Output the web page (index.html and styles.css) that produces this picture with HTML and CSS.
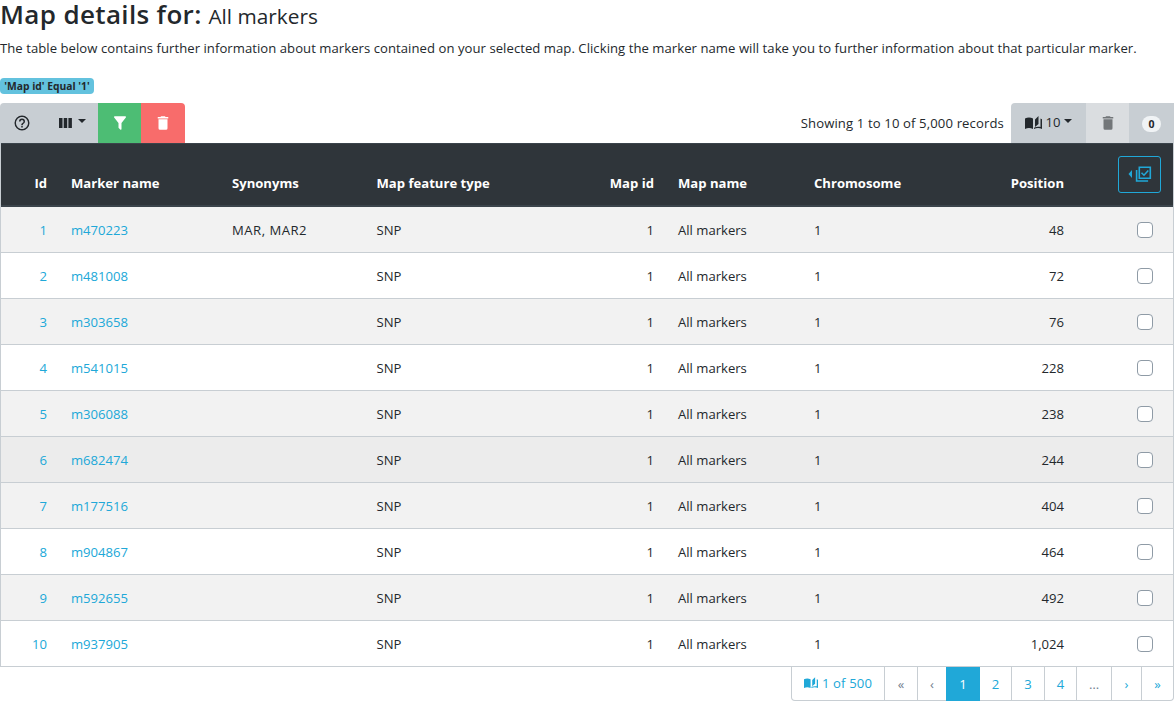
FILE: index.html
```
<!DOCTYPE html>
<html lang="en">
<head>
<meta charset="utf-8">
<title>Map details</title>
<link rel="stylesheet" href="styles.css">
</head>
<body>
<svg width="0" height="0" class="sprite">
  <symbol id="trash" viewBox="0 0 24 24"><path fill="currentColor" d="M19 4h-3.500l-1-1h-5l-1 1H5v2h14M6 19a2 2 0 0 0 2 2h8a2 2 0 0 0 2-2V7H6v12z"/></symbol>
  <symbol id="book" viewBox="0 0 17 14"><path fill="currentColor" d="M0 2.500C2.500 1.200 5.500 1.200 8 2.500V13C5.500 11.700 2.500 11.700 0 13zM13.500 0v8L10 11V3.500zM15.500 2.500l1.500.700V13c-2.500-1.300-5.500-1.300-8 0V2.500v9.200c2-.900 4.300-1.100 6.500-.700z"/></symbol>
</svg>
<h1 class="title"><span>Map details for:</span> <small>All markers</small></h1>
<p class="intro">The table below contains further information about markers contained on your selected map. Clicking the marker name will take you to further information about that particular marker.</p>
<div class="filters"><span class="badge">'Map id' Equal '1'</span></div>
<div class="toolbar">
  <div class="group left">
    <button class="btn help"><svg class="icon help-icon" viewBox="0 0 24 24"><path fill="currentColor" d="M11 18h2v-2h-2v2m1-16A10 10 0 0 0 2 12a10 10 0 0 0 10 10 10 10 0 0 0 10-10A10 10 0 0 0 12 2m0 18c-4.410 0-8-3.590-8-8s3.590-8 8-8 8 3.590 8 8-3.590 8-8 8m0-14a4 4 0 0 0-4 4h2a2 2 0 0 1 2-2 2 2 0 0 1 2 2c0 2-3 1.750-3 5h2c0-2.250 3-2.500 3-5a4 4 0 0 0-4-4z"/></svg></button>
    <button class="btn columns"><svg class="columns-icon" viewBox="0 0 13 10"><path fill="currentColor" d="M0 0h3.500v10H0zM4.700 0h3.500v10H4.700zM9.400 0h3.500v10H9.400z"/></svg><i class="caret"></i></button>
    <button class="btn filter"><svg class="icon" viewBox="0 0 24 24"><path fill="currentColor" d="M14 12v7.880c.040.300-.060.620-.290.830a.996.996 0 0 1-1.410 0l-2.010-2.010a.989.989 0 0 1-.290-.830V12h-.030L4.210 4.620a1 1 0 0 1 .170-1.400c.190-.140.400-.220.620-.220h14c.220 0 .430.080.620.220a1 1 0 0 1 .170 1.400L14.030 12H14z"/></svg></button>
    <button class="btn clear"><svg class="icon"><use href="#trash"/></svg></button>
  </div>
  <span class="records">Showing 1 to 10 of 5,000 records</span>
  <div class="group right">
    <button class="btn per-page"><svg class="book"><use href="#book"/></svg><span>10</span><i class="caret"></i></button>
    <button class="btn remove"><svg class="icon"><use href="#trash"/></svg></button>
    <button class="btn count"><span class="pill">0</span></button>
  </div>
</div>
<table class="markers">
  <colgroup><col class="c-id"><col class="c-name"><col class="c-syn"><col class="c-type"><col class="c-mapid"><col class="c-map"><col class="c-chr"><col class="c-pos"><col class="c-sel"></colgroup>
  <thead><tr><th class="num">Id</th><th>Marker name</th><th>Synonyms</th><th>Map feature type</th><th class="num">Map id</th><th>Map name</th><th>Chromosome</th><th class="num">Position</th><th class="select"><button class="select-all"><svg class="select-icon" viewBox="0 0 24 18"><path fill="currentColor" d="M4 5v8L.500 9z"/><g fill="none" stroke="currentColor" stroke-width="1.600"><path d="M11.300 2.300h11v11h-11zM8.600 5v11h11.500"/><path d="M13.500 7.700l2.500 2.500 4.300-4.700"/></g></svg></button></th></tr></thead>
  <tbody>
    <tr><td class="num"><a>1</a></td><td><a>m470223</a></td><td class="synonyms">MAR, MAR2</td><td>SNP</td><td class="num">1</td><td>All markers</td><td>1</td><td class="num">48</td><td class="select"><input type="checkbox"></td></tr>
    <tr><td class="num"><a>2</a></td><td><a>m481008</a></td><td></td><td>SNP</td><td class="num">1</td><td>All markers</td><td>1</td><td class="num">72</td><td class="select"><input type="checkbox"></td></tr>
    <tr><td class="num"><a>3</a></td><td><a>m303658</a></td><td></td><td>SNP</td><td class="num">1</td><td>All markers</td><td>1</td><td class="num">76</td><td class="select"><input type="checkbox"></td></tr>
    <tr><td class="num"><a>4</a></td><td><a>m541015</a></td><td></td><td>SNP</td><td class="num">1</td><td>All markers</td><td>1</td><td class="num">228</td><td class="select"><input type="checkbox"></td></tr>
    <tr><td class="num"><a>5</a></td><td><a>m306088</a></td><td></td><td>SNP</td><td class="num">1</td><td>All markers</td><td>1</td><td class="num">238</td><td class="select"><input type="checkbox"></td></tr>
    <tr class="hovered"><td class="num"><a>6</a></td><td><a>m682474</a></td><td></td><td>SNP</td><td class="num">1</td><td>All markers</td><td>1</td><td class="num">244</td><td class="select"><input type="checkbox"></td></tr>
    <tr><td class="num"><a>7</a></td><td><a>m177516</a></td><td></td><td>SNP</td><td class="num">1</td><td>All markers</td><td>1</td><td class="num">404</td><td class="select"><input type="checkbox"></td></tr>
    <tr><td class="num"><a>8</a></td><td><a>m904867</a></td><td></td><td>SNP</td><td class="num">1</td><td>All markers</td><td>1</td><td class="num">464</td><td class="select"><input type="checkbox"></td></tr>
    <tr><td class="num"><a>9</a></td><td><a>m592655</a></td><td></td><td>SNP</td><td class="num">1</td><td>All markers</td><td>1</td><td class="num">492</td><td class="select"><input type="checkbox"></td></tr>
    <tr><td class="num"><a>10</a></td><td><a>m937905</a></td><td></td><td>SNP</td><td class="num">1</td><td>All markers</td><td>1</td><td class="num">1,024</td><td class="select"><input type="checkbox"></td></tr>
  </tbody>
</table>
<nav class="pager">
  <a class="page jump"><svg class="book"><use href="#book"/></svg>1 of 500</a><a class="page muted first">«</a><a class="page muted prev">‹</a><a class="page current">1</a><a class="page two">2</a><a class="page three">3</a><a class="page four">4</a><a class="page muted dots">…</a><a class="page next">›</a><a class="page last">»</a>
</nav>
</body>
</html>
```
FILE: styles.css
```
* { box-sizing: border-box; }
body { margin: 0; width: 1174px; height: 701px; overflow: hidden; background: #fff; color: #23282c; font: 13.1px/21px "Open Sans", "Noto Sans", sans-serif; }
.sprite { display: block; }
.title { margin: 0; height: 38px; line-height: 29px; font-size: 26px; font-weight: 600; white-space: nowrap; }
.title span { letter-spacing: .35px; }
.title small { font-size: 20.800px; font-weight: 400; }
.intro { margin: 0; height: 40px; letter-spacing: .052px; white-space: nowrap; }
.filters { height: 25px; display: flex; align-items: flex-start; }
.badge { width: 94px; height: 16px; border-radius: 4px; background: #63c2de; font-size: 10.300px; font-weight: 700; line-height: 16px; text-align: center; white-space: nowrap; }
.toolbar { display: flex; align-items: stretch; height: 40px; }
.group { display: flex; overflow: hidden; }
.left { border-radius: 4px 4px 0 0; }
.right { border-radius: 4px 0 0 0; }
.btn { display: flex; align-items: center; justify-content: center; padding: 0; border: 0; background: #c8ced3; color: #23282c; font: inherit; }
.icon { width: 18px; height: 18px; flex: none; }
.book { width: 17px; height: 14px; flex: none; }
.help { width: 44px; }
.columns { width: 54px; gap: 6px; padding-left: 3px; }
.columns-icon { width: 13px; height: 10px; }
.caret { border: 4px solid transparent; border-top-color: currentColor; border-bottom: 0; margin-bottom: 4px; }
.filter { width: 43px; background: #4dbd74; color: #fff; }
.clear { width: 44px; background: #f86c6b; color: #fff; }
.records { margin-left: auto; margin-right: 7px; line-height: 40px; letter-spacing: .13px; }
.per-page { width: 75px; gap: 4px; }
.per-page span { padding-bottom: 2px; }
.remove { width: 43px; background: #dadde0; color: #727679; }
.count { width: 45px; }
.pill { width: 19px; height: 16px; margin-top: 2px; border-radius: 8px; background: #f0f3f5; font-size: 10.500px; font-weight: 700; line-height: 16px; }
.markers { width: 1174px; border-collapse: separate; border-spacing: 0; table-layout: fixed; border: solid #c8ced3; border-width: 0 1px; }
.c-id { width: 58px; } .c-name { width: 161px; } .c-syn { width: 144.500px; } .c-type { width: 201px; } .c-mapid { width: 100.500px; }
.c-map { width: 136px; } .c-chr { width: 137px; } .c-pos { width: 137px; } .c-sel { width: 97px; }
th, td { padding: 0 12px; text-align: left; white-space: nowrap; }
th { height: 64px; padding-top: 18px; background: #2f353a; color: #fff; font-weight: 700; border-top: 1px solid #3b444b; border-bottom: 2px solid #3b444b; }
td { height: 46px; padding-top: 2px; border-bottom: 1px solid #c8ced3; }
tbody tr:nth-child(odd) { background: #f2f2f2; }
tbody .hovered { background: #ececec; }
.num { text-align: right; }
.synonyms { letter-spacing: .5px; }
a { color: #20a8d8; }
.select { text-align: right; }
th.select { padding: 0 12px 0 0; }
td.select { padding: 0 20px 0 0; }
.select-all { display: inline-flex; align-items: center; justify-content: center; width: 43px; height: 37px; padding: 0 0 2px; border: 1px solid #20a8d8; border-radius: 3px; background: none; color: #20a8d8; vertical-align: middle; }
.select-icon { width: 24px; height: 18px; }
input { appearance: none; display: block; width: 16px; height: 16px; margin: 0 0 0 auto; border: 1px solid #8f9ba6; border-radius: 4px; background: #fff; }
.pager { display: flex; width: 383px; height: 34px; margin-left: auto; border: 1px solid #c8ced3; border-top: 0; border-radius: 0 0 4px 4px; }
.page { display: flex; align-items: center; justify-content: center; flex: none; width: 32px; height: 34px; border-right: 1px solid #c8ced3; }
.page:last-child { border-right: 0; }
.muted { color: #73818f; }
.page.jump { width: 93px; gap: 4px; padding-bottom: 2px; letter-spacing: .15px; }
.jump .book { width: 14px; height: 12px; }
.page.first { width: 33px; }
.page.prev { width: 28px; border-right: 0; }
.page.current { width: 34px; background: #20a8d8; color: #fff; border: 0; }
.page.three { width: 33px; }
.page.dots { width: 35px; }
.page.next { width: 30px; }
.page.last { width: 31px; }
```
